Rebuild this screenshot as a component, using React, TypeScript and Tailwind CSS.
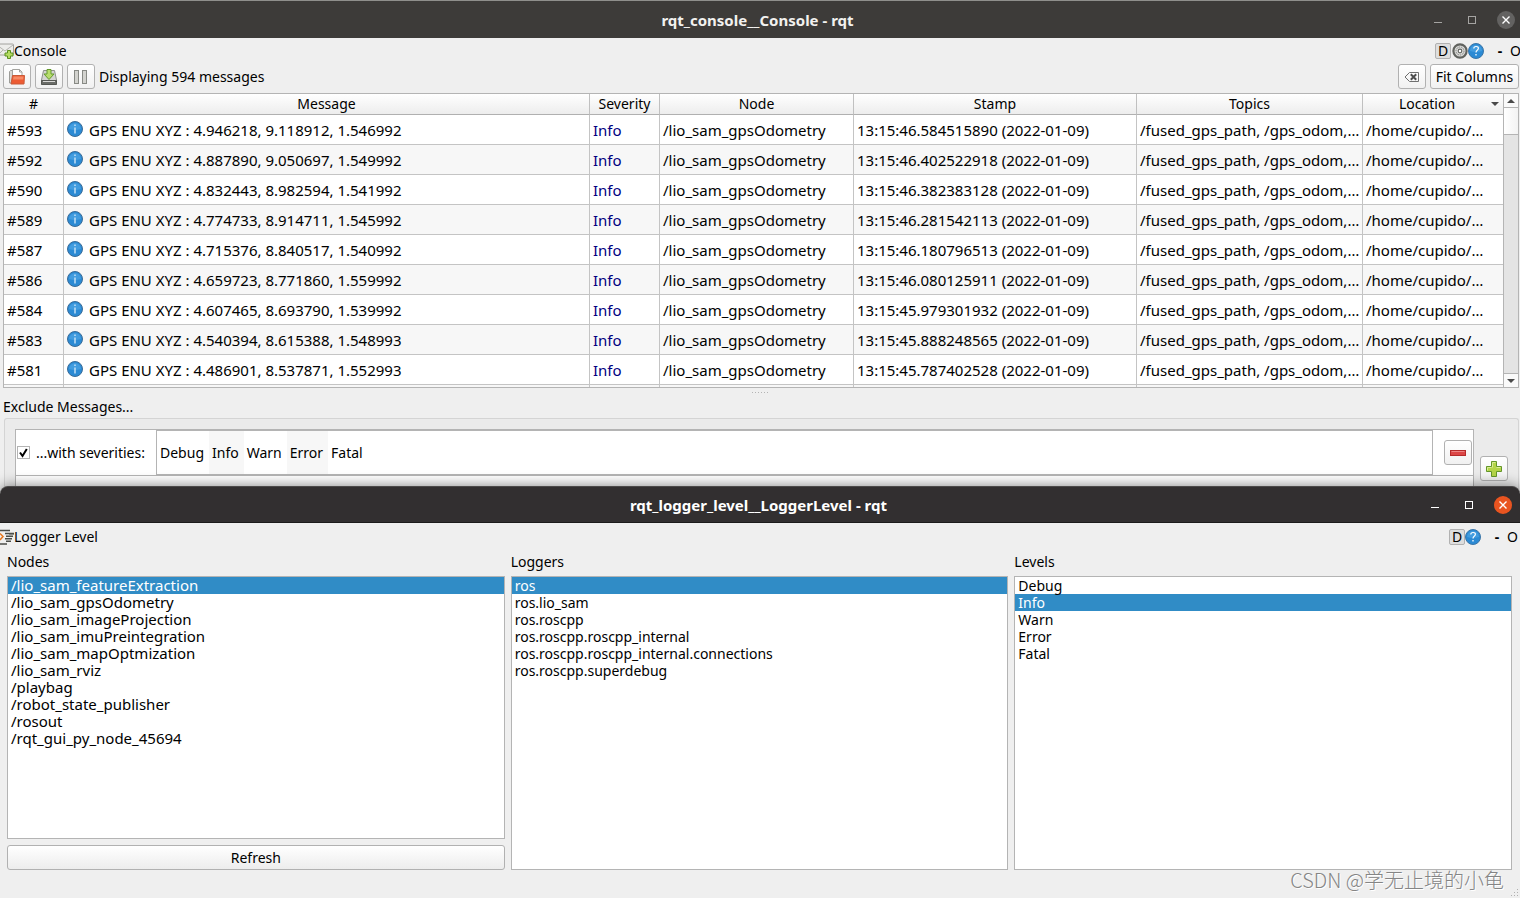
import React, { useState } from "react";

interface LogRow {
  id: number;
  xyz: string;
  stamp: string;
}

const ROWS: LogRow[] = [
  { id: 593, xyz: "4.946218, 9.118912, 1.546992", stamp: "13:15:46.584515890" },
  { id: 592, xyz: "4.887890, 9.050697, 1.549992", stamp: "13:15:46.402522918" },
  { id: 590, xyz: "4.832443, 8.982594, 1.541992", stamp: "13:15:46.382383128" },
  { id: 589, xyz: "4.774733, 8.914711, 1.545992", stamp: "13:15:46.281542113" },
  { id: 587, xyz: "4.715376, 8.840517, 1.540992", stamp: "13:15:46.180796513" },
  { id: 586, xyz: "4.659723, 8.771860, 1.559992", stamp: "13:15:46.080125911" },
  { id: 584, xyz: "4.607465, 8.693790, 1.539992", stamp: "13:15:45.979301932" },
  { id: 583, xyz: "4.540394, 8.615388, 1.548993", stamp: "13:15:45.888248565" },
  { id: 581, xyz: "4.486901, 8.537871, 1.552993", stamp: "13:15:45.787402528" },
];

const COLUMNS = ["#", "Message", "Severity", "Node", "Stamp", "Topics", "Location"];

const SEVERITIES = ["Debug", "Info", "Warn", "Error", "Fatal"];

const NODES = [
  "/lio_sam_featureExtraction",
  "/lio_sam_gpsOdometry",
  "/lio_sam_imageProjection",
  "/lio_sam_imuPreintegration",
  "/lio_sam_mapOptmization",
  "/lio_sam_rviz",
  "/playbag",
  "/robot_state_publisher",
  "/rosout",
  "/rqt_gui_py_node_45694",
];

const LOGGERS = [
  "ros",
  "ros.lio_sam",
  "ros.roscpp",
  "ros.roscpp.roscpp_internal",
  "ros.roscpp.roscpp_internal.connections",
  "ros.roscpp.superdebug",
];

export default function App() {
  return (
    <div className="relative flex min-h-screen flex-col overflow-hidden bg-[#efefef] font-['Noto_Sans','Noto_Sans_CJK_SC',sans-serif] text-sm text-black">
      <ConsoleWindow />
      <LoggerLevelWindow />
      <p className="pointer-events-none absolute right-4 bottom-1 z-10 font-['Noto_Sans_CJK_SC',sans-serif] text-xl leading-7 font-light text-[#858585] [text-shadow:1px_1px_0_#ffffff]">
        CSDN @学无止境的小龟
      </p>
    </div>
  );
}

/* CONSOLE WINDOW */

function ConsoleWindow() {
  return (
    <section className="bg-[#efefef]">
      <header className="grid h-[38px] grid-cols-[1fr_auto_1fr] items-center border-t border-[#8f8f8c] bg-[#3d3b39] pr-[5px]">
        <h1 className="col-start-2 text-[15px] leading-5 font-bold text-[#f2f1ef]">rqt_console__Console - rqt</h1>
        <WindowButtons active={false} />
      </header>

      <div className="flex h-[26px] items-center">
        <MailIcon />
        <h2>Console</h2>
        <div className="ml-auto flex items-center">
          <DockButton />
          <button aria-label="Settings" className="ml-px"><GearIcon /></button>
          <button aria-label="Help"><HelpIcon /></button>
          <button aria-label="Minimize dock" className="ml-[12px] w-2 font-bold">-</button>
          <button aria-label="Undock" className="ml-[6px] w-[10px]">O</button>
        </div>
      </div>

      <div className="flex h-[25px] items-center gap-1 pr-px pl-[3px]">
        <ToolButton label="Load messages"><FolderIcon /></ToolButton>
        <ToolButton label="Save messages"><SaveIcon /></ToolButton>
        <ToolButton label="Pause"><PauseIcon /></ToolButton>
        <span>Displaying 594 messages</span>
        <div className="ml-auto flex gap-1">
          <ToolButton label="Clear messages"><ClearIcon /></ToolButton>
          <button className="h-[25px] w-[89px] rounded-[3px] border border-[#b1b1b1] bg-linear-to-b from-white to-[#f1f1f1] whitespace-nowrap">
            Fit Columns
          </button>
        </div>
      </div>

      <MessageTable />

      <div className="flex h-2 items-center justify-center gap-[2px]">
        {[0, 1, 2, 3, 4, 5].map((i) => (
          <span key={i} className="size-px bg-[#b4b4b4]" />
        ))}
      </div>

      <h2 className="pt-px pb-px pl-[3px] leading-5">Exclude Messages...</h2>
      <ExcludeFilters />
    </section>
  );
}

function MessageTable() {
  return (
    <div className="mt-1 mr-px ml-[3px] flex h-[295px] border border-[#b4b4b4] bg-white">
      <div className="min-w-0 flex-1 overflow-hidden">
        <table className="w-full table-fixed border-separate border-spacing-0">
          <colgroup>
            <col className="w-[60px]" />
            <col />
            <col className="w-[70px]" />
            <col className="w-[194px]" />
            <col className="w-[283px]" />
            <col className="w-[226px]" />
            <col className="w-[140px]" />
          </colgroup>
          <thead>
            <tr className="h-[21px]">
              {COLUMNS.map((name) => (
                <th
                  key={name}
                  className="border-r border-b border-[#c0c0c0] border-b-[#b0b0b0] bg-linear-to-b from-white to-[#ededed] p-0 leading-5 font-normal last:border-r-0"
                >
                  {name === "Location" ? (
                    <span className="flex items-center pr-1">
                      <span className="flex-1">{name}</span>
                      <Arrow />
                    </span>
                  ) : (
                    name
                  )}
                </th>
              ))}
            </tr>
          </thead>
          <tbody className="text-[15px] leading-[18px]">
            {ROWS.map((row) => (
              <tr
                key={row.id}
                className="h-[30px] whitespace-nowrap even:bg-[#f7f7f7] [&>td]:border-r [&>td]:border-b [&>td]:border-[#c4c4c4] [&>td]:p-0 [&>td]:pl-[3px] [&>td:last-child]:border-r-0"
              >
                <td>#{row.id}</td>
                <td>
                  <span className="flex items-center gap-[6px]">
                    <InfoIcon />
                    GPS ENU XYZ : {row.xyz}
                  </span>
                </td>
                <td className="text-[#00007f]">Info</td>
                <td>/lio_sam_gpsOdometry</td>
                <td>{row.stamp} (2022-01-09)</td>
                <td>/fused_gps_path, /gps_odom,…</td>
                <td>/home/cupido/…</td>
              </tr>
            ))}
            <tr className="h-[2px] bg-[#f7f7f7] [&>td]:border-r [&>td]:border-[#c4c4c4] [&>td]:p-0 [&>td:last-child]:border-r-0">
              {COLUMNS.map((name) => (
                <td key={name} />
              ))}
            </tr>
          </tbody>
        </table>
      </div>
      <div className="flex w-[15px] flex-col border-l border-[#b4b4b4] bg-[#e4e4e4]">
        <button aria-label="Scroll up" className="flex h-[14px] items-center justify-center border-b border-[#b4b4b4] bg-[#fafafa]">
          <Arrow up />
        </button>
        <div className="h-[27px] border-b border-[#b4b4b4] bg-linear-to-r from-white to-[#f3f3f3]" />
        <button aria-label="Scroll down" className="mt-auto flex h-[14px] items-center justify-center border-t border-[#b4b4b4] bg-[#fafafa]">
          <Arrow />
        </button>
      </div>
    </div>
  );
}

function ExcludeFilters() {
  const [enabled, setEnabled] = useState(true);

  return (
    <div className="mr-px ml-1 flex h-[76px] rounded-t-[3px] border border-b-0 border-[#d4d4d4] bg-[#ebebeb] pt-[10px] pr-[10px] pl-[10px]">
      <div className="flex-1 border border-b-0 border-[#b4b4b4] bg-white">
        <div className="flex h-[46px] border-b border-[#b4b4b4]">
          <label className="flex w-[140px] items-center gap-[6px] pl-px whitespace-nowrap">
            <span className="relative flex size-[13px]">
              <input
                type="checkbox"
                checked={enabled}
                onChange={(e) => setEnabled(e.target.checked)}
                className="size-[13px] appearance-none border border-[#b4b4b4] bg-white"
              />
              {enabled && (
                <svg viewBox="0 0 13 13" className="pointer-events-none absolute inset-0 size-[13px]" fill="none" stroke="#000" strokeWidth="2">
                  <path d="M3 6.5 L5.5 10 L9.8 3" />
                </svg>
              )}
            </span>
            ...with severities:
          </label>
          <ul className="flex flex-1 border border-[#b4b4b4]">
            {SEVERITIES.map((s) => (
              <li key={s} className="flex items-center pr-[5px] pl-[3px] even:bg-[#f7f7f7]">{s}</li>
            ))}
          </ul>
          <div className="flex w-10 items-center justify-end pr-px">
            <ToolButton label="Remove filter"><MinusIcon /></ToolButton>
          </div>
        </div>
      </div>
      <div className="pt-[27px] pl-[6px]">
        <ToolButton label="Add filter"><PlusIcon /></ToolButton>
      </div>
    </div>
  );
}

/* LOGGER LEVEL WINDOW */

function LoggerLevelWindow() {
  return (
    <section className="relative -mt-2 flex flex-1 flex-col rounded-t-lg bg-[#efefef] shadow-[0_0_14px_rgba(0,0,0,0.5)]">
      <header className="grid h-[37px] grid-cols-[1fr_auto_1fr] items-center rounded-t-lg border-t border-b border-t-[#4c4a4a] border-b-[#1c1b1b] bg-[#322f30] pr-2 pl-[5px]">
        <h1 className="col-start-2 text-[15px] leading-5 font-bold text-white">rqt_logger_level__LoggerLevel - rqt</h1>
        <WindowButtons active />
      </header>

      <div className="flex h-[27px] items-center">
        <LevelIcon />
        <h2>Logger Level</h2>
        <div className="ml-auto flex items-center pr-[2px]">
          <DockButton />
          <button aria-label="Help"><HelpIcon /></button>
          <button aria-label="Minimize dock" className="ml-[12px] w-2 font-bold">-</button>
          <button aria-label="Undock" className="ml-[6px] w-[11px]">O</button>
        </div>
      </div>

      <div className="grid flex-1 grid-cols-3 gap-[6px] pt-[2px] pr-2 pb-7 pl-[7px]">
        <ListColumn title="Nodes" items={NODES} initial={0} large>
          <button className="mt-[6px] h-[25px] rounded-[3px] border border-[#b1b1b1] bg-linear-to-b from-white to-[#ededed]">
            Refresh
          </button>
        </ListColumn>
        <ListColumn title="Loggers" items={LOGGERS} initial={0} />
        <ListColumn title="Levels" items={SEVERITIES} initial={1} />
      </div>
      <SizeGrip />
    </section>
  );
}

interface ListColumnProps {
  title: string;
  items: string[];
  initial: number;
  large?: boolean;
  children?: React.ReactNode;
}

function ListColumn({ title, items, initial, large = false, children }: ListColumnProps) {
  const [selected, setSelected] = useState(initial);

  return (
    <div className="flex min-w-0 flex-col">
      <h3 id={title} className="pb-1 leading-5">{title}</h3>
      <ul role="listbox" aria-labelledby={title} className={`flex-1 border border-[#b4b4b4] bg-white ${large ? "text-[15px]" : ""}`}>
        {items.map((item, i) => (
          <li
            key={item}
            role="option"
            aria-selected={i === selected}
            onClick={() => setSelected(i)}
            className={`h-[17px] pl-[3px] leading-[17px] ${i === selected ? "bg-[#308cc6] text-white" : ""}`}
          >
            {item}
          </li>
        ))}
      </ul>
      {children}
    </div>
  );
}

/* SHARED CONTROLS */

function WindowButtons({ active }: { active: boolean }) {
  return (
    <div className={`flex items-center justify-end ${active ? "text-white" : "text-[#a5a4a2]"}`}>
      <button aria-label="Minimize">
        <svg viewBox="0 0 34 18" className="h-[18px] w-[34px]" stroke="currentColor">
          <path d="M13 11.5h8" />
        </svg>
      </button>
      <button aria-label="Maximize">
        <svg viewBox="0 0 34 18" className="h-[18px] w-[34px]" fill="none" stroke="currentColor">
          <rect x="13.5" y="5.5" width="7" height="7" />
        </svg>
      </button>
      <button aria-label="Close" className="ml-2">
        <svg viewBox="0 0 18 18" className="size-[18px]">
          <circle cx="9" cy="9" r="9" fill={active ? "#e95420" : "#636261"} />
          <path d="M5.5 5.5l7 7M12.5 5.5l-7 7" stroke="#fff" strokeWidth="1.4" />
        </svg>
      </button>
    </div>
  );
}

function DockButton() {
  return (
    <button className="flex size-4 items-center justify-center rounded-[2px] border border-[#b1b1b1] bg-[#dedede]">
      D
    </button>
  );
}

function ToolButton({ label, children }: { label: string; children: React.ReactNode }) {
  return (
    <button
      aria-label={label}
      className="flex h-[25px] w-7 items-center justify-center rounded-[3px] border border-[#b1b1b1] bg-linear-to-b from-white to-[#f1f1f1]"
    >
      {children}
    </button>
  );
}

/* ICONS */

const Arrow = ({ up = false }: { up?: boolean }) => (
  <svg viewBox="0 0 8 4" className="h-1 w-2" fill="#4a4a4a">
    <path d={up ? "M0 4h8L4 0z" : "M0 0h8L4 4z"} />
  </svg>
);

const InfoIcon = () => (
  <svg viewBox="0 0 16 16" className="mb-[2px] size-4">
    <circle cx="8" cy="8" r="7.5" fill="#2b8ad4" stroke="#3a6c98" />
    <path d="M2 8a6 6 0 0112 0q-6 2-12 0z" fill="#5aaeea" opacity="0.5" />
    <path d="M8 6.5v6M8 3.5v1.6" stroke="#e4f2fc" strokeWidth="1.2" />
  </svg>
);

const HelpIcon = () => (
  <svg viewBox="0 0 16 16" className="size-4" fill="none">
    <circle cx="8" cy="8" r="7.5" fill="#2b8ad4" stroke="#3b76a8" />
    <path d="M2 8a6 6 0 0112 0q-6 2-12 0z" fill="#5aaeea" opacity="0.5" />
    <path d="M5.8 5.4q0-1.9 2.3-1.9t2.3 1.8q0 1.1-1.2 1.9T8 9.4" stroke="#fff" strokeWidth="1.2" />
    <path d="M8 11v1.4" stroke="#fff" strokeWidth="1.3" />
  </svg>
);

const GearIcon = () => (
  <svg viewBox="0 0 16 16" className="size-4" fill="none">
    <circle cx="8" cy="8" r="6.6" fill="#dcdcda" stroke="#60625e" strokeWidth="2.2" />
    <circle cx="8" cy="8" r="4" stroke="#80827e" strokeWidth="1" strokeDasharray="1.6 0.8" />
    <circle cx="8" cy="8" r="1.8" fill="#fff" stroke="#656763" strokeWidth="1.2" />
  </svg>
);

const MailIcon = () => (
  <svg viewBox="0 0 14 16" className="h-4 w-[14px]" fill="none">
    <rect x="-3" y="1" width="16.5" height="11" rx="1" fill="#ededeb" stroke="#a2a29e" />
    <path d="M-3 2l8 6 8-6M-1 11l4-4M12 11L7.500 7" stroke="#b4b4b0" />
    <path d="M7.500 7.500h3v2.500H13v3h-2.500v2.500h-3V13H5v-3h2.500z" fill="#b5dc63" stroke="#5b9020" />
  </svg>
);

const LevelIcon = () => (
  <svg viewBox="0 0 14 16" className="h-4 w-[14px]" fill="none">
    <path d="M0 1.500h10M5 4.500h9M6 7.200h7M5 9.800h7M6 12.300h5M0 15h7" stroke="#4c4e4a" strokeWidth="1.6" />
    <path d="M9 5.500h5" stroke="#8a8c88" />
    <path d="M0 4.500l3 3-3 3.500" stroke="#e8771e" strokeWidth="1.5" />
  </svg>
);

const FolderIcon = () => (
  <svg viewBox="0 0 16 16" className="size-4" fill="none">
    <path d="M.5 14V2.500L1.500 1.500h3l1 1.500h2v11z" fill="#d9d9d6" stroke="#9c9c98" />
    <path d="M3.500 8V.5h7l2.500 2.500v5z" fill="#fff" stroke="#a3a39f" />
    <path d="M10.500 .5V3H13" stroke="#a3a39f" />
    <path d="M3.500 6.500h12l-.5 8.500H2z" fill="#ed5b33" stroke="#c95a38" />
    <path d="M4.500 7.500h10l-.3 3H4z" fill="#f78b66" />
  </svg>
);

const SaveIcon = () => (
  <svg viewBox="0 0 16 16" className="size-4" fill="none">
    <path d="M2.500 1.500h11l2 9.500v4H.5v-4z" fill="#d4d4d2" stroke="#8e908c" />
    <path d="M.5 11.500h15v4H.5z" fill="#6a6c68" stroke="#555753" />
    <path d="M2 12.500h12" stroke="#d8d8d6" />
    <path d="M6 .5h4V5h3l-5 5.500L3 5h3z" fill="#b7dd6c" stroke="#649a2c" />
  </svg>
);

const PauseIcon = () => (
  <svg viewBox="0 0 16 16" className="size-4" fill="#d3d3cf" stroke="#888a85">
    <rect x="1.5" y="1.5" width="4" height="13" />
    <rect x="9.500" y="1.5" width="4" height="13" />
  </svg>
);

const ClearIcon = () => (
  <svg viewBox="0 0 16 16" className="size-4" fill="none">
    <path d="M5.500 3.500h9v9h-9L1 8z" stroke="#6f6f6f" />
    <path d="M6.800 5.300l5.400 5.400M12.200 5.300l-5.400 5.400" stroke="#4d4d4d" strokeWidth="2" />
  </svg>
);

const MinusIcon = () => (
  <svg viewBox="0 0 16 16" className="size-4">
    <rect x=".5" y="5.500" width="15" height="5" fill="#dc4646" stroke="#b52b2b" />
    <path d="M1.500 6.500h13" stroke="#ee8585" />
  </svg>
);

const PlusIcon = () => (
  <svg viewBox="0 0 16 16" className="size-4">
    <path d="M5.500 .5h5v5h5v5h-5v5h-5v-5h-5v-5h5z" fill="#b4d548" stroke="#64962a" />
    <path d="M6.500 6.500v-5h3M1.500 9.500v-3h4M10.500 6.500h4" fill="none" stroke="#d9ec96" />
  </svg>
);

const SizeGrip = () => (
  <svg viewBox="0 0 10 10" className="absolute right-0 bottom-0 size-[10px]" fill="#b0b0b0">
    <path d="M7 1h1v1H7zM4 4h1v1H4zM7 4h1v1H7zM1 7h1v1H1zM4 7h1v1H4zM7 7h1v1H7z" />
  </svg>
);
